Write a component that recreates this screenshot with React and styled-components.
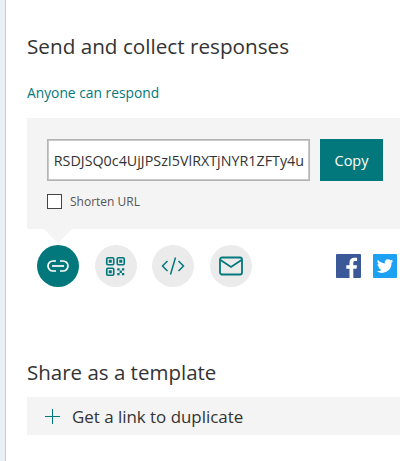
import React from "react";
import styled, { createGlobalStyle } from "styled-components";

const teal = "#03787c";

export default function App() {
  return (
    <>
      <GlobalStyle />
      <Page>
        <Heading>Send and collect responses</Heading>
        <AudienceLink>Anyone can respond</AudienceLink>
        <LinkPanel>
          <LinkRow>
            <UrlBox>
              <UrlClip>
                <UrlText>aRSDJSQ0c4UjJPSzI5VlRXTjNYR1ZFTy4u</UrlText>
              </UrlClip>
            </UrlBox>
            <CopyButton>Copy</CopyButton>
          </LinkRow>
          <ShortenRow>
            <CheckBox />
            <ShortenLabel>Shorten URL</ShortenLabel>
          </ShortenRow>
        </LinkPanel>
        <ShareRow>
          <ShareButtons>
            <RoundButton $active>
              <svg width="24" height="14" viewBox="0 0 24 14" fill="none" stroke="#fff" strokeWidth="1.7">
                <path d="M10 2H7a5 5 0 0 0 0 10h3M14 2h3a5 5 0 0 1 0 10h-3" />
                <path d="M6 7h12" />
              </svg>
            </RoundButton>
            <RoundButton>
              <svg width="21" height="21" viewBox="0 0 24 24" fill="none" stroke={teal} strokeWidth="1.9">
                <rect x="2" y="2" width="8" height="8" rx="1.4" />
                <rect x="14" y="2" width="8" height="8" rx="1.4" />
                <rect x="2" y="14" width="8" height="8" rx="1.4" />
                <path d="M5.200 5.200h1.600v1.600H5.200zM17.200 5.200h1.600v1.600h-1.600zM5.200 17.200h1.600v1.600H5.200z" />
                <path d="M14 14h2.700v2.700H14zM19.300 14H22v2.700h-2.700zM16.700 16.700h2.600v2.600h-2.600zM14 19.300h2.700V22H14zM19.300 19.300H22V22h-2.700z" fill={teal} stroke="none" />
              </svg>
            </RoundButton>
            <RoundButton>
              <svg width="24" height="20" viewBox="0 0 24 20" fill="none" stroke={teal} strokeWidth="1.500">
                <path d="M6.500 5 1.500 10l5 5M17.500 5l5 5-5 5M14.500 1.500l-5 17" />
              </svg>
            </RoundButton>
            <RoundButton>
              <svg width="24" height="20" viewBox="0 0 24 20" fill="none" stroke={teal} strokeWidth="1.800">
                <rect x="1" y="1.500" width="22" height="17" rx="2" />
                <path d="m1.500 4 10.500 7 10.500-7" />
              </svg>
            </RoundButton>
          </ShareButtons>
          <SocialIcons>
            <svg width="25" height="24" viewBox="0 0 25 25" preserveAspectRatio="none">
              <rect width="25" height="25" rx="1" fill="#3b5998" />
              <path d="M17.300 25v-9.600h3.200l.5-3.800h-3.700V9.200c0-1.100.3-1.800 1.800-1.800h2V4c-.3 0-1.500-.1-2.800-.1-2.900 0-4.800 1.700-4.800 4.900v2.800H10.300v3.800h3.200V25z" fill="#fff" />
            </svg>
            <svg width="24" height="24" viewBox="0 0 25 25">
              <rect width="25" height="25" rx="1" fill="#1da1f2" />
              <path d="M21 7.100c-.6.300-1.300.5-2 .6.700-.4 1.300-1.100 1.500-1.900-.7.400-1.400.7-2.200.8a3.500 3.500 0 0 0-6 3.200c-2.900-.1-5.500-1.500-7.200-3.700-.9 1.600-.5 3.600 1.100 4.700-.6 0-1.100-.2-1.600-.4 0 1.700 1.200 3.100 2.800 3.500-.5.100-1 .1-1.600 0 .4 1.400 1.700 2.400 3.300 2.400A7 7 0 0 1 3.900 18a10 10 0 0 0 15.400-8.900c.7-.5 1.300-1.200 1.700-2z" fill="#fff" />
            </svg>
          </SocialIcons>
        </ShareRow>
        <TemplateHeading>Share as a template</TemplateHeading>
        <TemplateBar>
          <PlusIcon width="15" height="15" viewBox="0 0 15 15">
            <path d="M7.500 0v15M0 7.500h15" stroke={teal} strokeWidth="1" fill="none" />
          </PlusIcon>
          <TemplateLabel>Get a link to duplicate</TemplateLabel>
        </TemplateBar>
      </Page>
    </>
  );
}

const GlobalStyle = createGlobalStyle`
  html, body {
    margin: 0;
    height: 100%;
    overflow: hidden;
    background: #fff;
    font-family: "Open Sans", "Noto Sans", sans-serif;
  }
`;

const Page = styled.div`
  box-sizing: border-box;
  width: 400px;
  height: 461px;
  padding: 32px 0 0 22px;
  background: #fff;
  border-left: 5px solid #e8f0f3;
  box-shadow: inset 1px 0 0 #c8ccce;
  overflow: hidden;
`;

const Heading = styled.h2`
  margin: 0;
  font-size: 20.700px;
  line-height: 28px;
  font-weight: 400;
  color: #333;
  white-space: nowrap;
`;

const AudienceLink = styled.div`
  margin-top: 23px;
  font-size: 13.800px;
  line-height: 20px;
  color: ${teal};
`;

const LinkPanel = styled.div`
  position: relative;
  margin-top: 15px;
  height: 111px;
  padding: 21px 0 0 20px;
  box-sizing: border-box;
  background: #f4f4f4;

  &::after {
    content: "";
    position: absolute;
    left: 17px;
    top: 100%;
    border-style: solid;
    border-width: 14px 14px 0;
    border-color: #f4f4f4 transparent transparent;
  }
`;

const LinkRow = styled.div`
  display: flex;
  gap: 10px;
`;

const UrlBox = styled.div`
  box-sizing: border-box;
  width: 263px;
  height: 42px;
  display: flex;
  align-items: center;
  padding: 0 5px 0 5px;
  background: #fff;
  border: 1px solid #b4b4b4;
  box-shadow: inset 0 0 0 1px #c8c8c8;
`;

const UrlClip = styled.div`
  flex: 1;
  min-width: 0;
  display: flex;
  justify-content: flex-end;
  overflow: hidden;
`;

const UrlText = styled.span`
  font-size: 14.300px;
  color: #333;
  white-space: nowrap;
`;

const CopyButton = styled.button`
  width: 63px;
  height: 42px;
  padding: 0;
  border: 0;
  background: ${teal};
  color: #fff;
  font-family: inherit;
  font-size: 14.500px;
`;

const ShortenRow = styled.div`
  display: flex;
  align-items: center;
  gap: 8px;
  margin-top: 11px;
`;

const CheckBox = styled.span`
  box-sizing: border-box;
  width: 15px;
  height: 15px;
  border: 1px solid #444;
  background: #fff;
`;

const ShortenLabel = styled.span`
  padding-top: 2px;
  font-size: 12px;
  line-height: 16px;
  color: #555;
`;

const ShareRow = styled.div`
  display: flex;
  align-items: center;
  justify-content: space-between;
  margin-top: 16px;
  padding: 0 3px 0 10px;
`;

const ShareButtons = styled.div`
  display: flex;
  gap: 15.500px;
`;

const RoundButton = styled.div`
  width: 42px;
  height: 42px;
  border-radius: 50%;
  display: flex;
  align-items: center;
  justify-content: center;
  background: ${(p) => (p.$active ? teal : "#ebebeb")};
`;

const SocialIcons = styled.div`
  display: flex;
  gap: 12px;
`;

const TemplateHeading = styled.h2`
  margin: 71px 0 0;
  font-size: 20.500px;
  line-height: 28px;
  font-weight: 400;
  color: #333;
`;

const TemplateBar = styled.div`
  display: flex;
  align-items: center;
  gap: 12px;
  margin-top: 11px;
  height: 38px;
  padding-left: 18px;
  background: #f4f4f4;
`;

const PlusIcon = styled.svg`
  flex: none;
`;

const TemplateLabel = styled.span`
  font-size: 16.900px;
  color: #333;
`;
